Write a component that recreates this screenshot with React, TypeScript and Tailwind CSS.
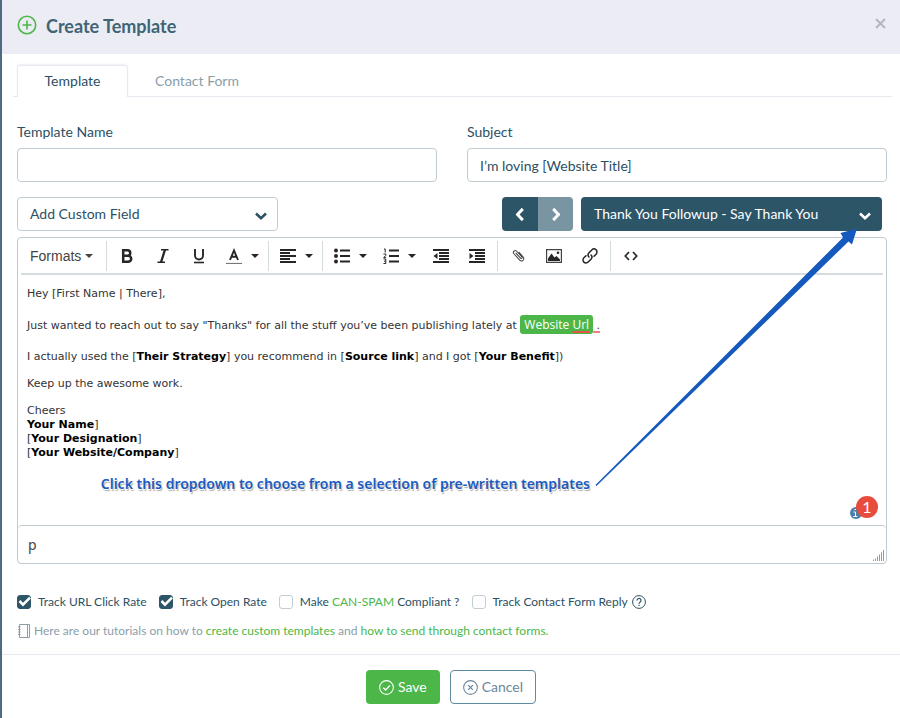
import { useState } from "react";
import type { ReactNode } from "react";

type CheckOptionProps = {
	id: string;
	defaultChecked?: boolean;
	children: ReactNode;
};

const TEMPLATES = [
	"Thank You Followup - Say Thank You",
	"Thank You Followup - Ask For Link",
	"Blank Template",
];

const CUSTOM_FIELDS = ["Add Custom Field", "First Name", "Website Url"];

function Chevron({ className }: { className: string }) {
	return (
		<svg viewBox="0 0 12 8" fill="none" className={className} aria-hidden="true">
			<path d="M1 1.5 6 6.2l5-4.700" stroke="currentColor" strokeWidth="2.6" />
		</svg>
	);
}

function Caret() {
	return (
		<svg viewBox="0 0 8 4" className="h-1 w-2" fill="currentColor" aria-hidden="true">
			<path d="M0 0h8L4 4z" />
		</svg>
	);
}

function ToolGroup({ children }: { children: ReactNode }) {
	return (
		<div className="flex h-[30px] items-center border-l border-[#d5dce0] px-[2px]">
			{children}
		</div>
	);
}

function Tool({ label, children }: { label: string; children: ReactNode }) {
	return (
		<button
			type="button"
			aria-label={label}
			className="flex h-[30px] w-9 items-center justify-center"
		>
			{children}
		</button>
	);
}

function SplitTool({ label, children }: { label: string; children: ReactNode }) {
	return (
		<div className="flex">
			<button
				type="button"
				aria-label={label}
				className="flex h-[30px] w-[34px] items-center justify-center"
			>
				{children}
			</button>
			<button
				type="button"
				aria-label={`${label} options`}
				className="flex h-[30px] w-[15px] items-center"
			>
				<Caret />
			</button>
		</div>
	);
}

function CheckOption({ id, defaultChecked, children }: CheckOptionProps) {
	return (
		<div className="flex items-center gap-[7px]">
			<span className="relative flex size-[14px]">
				<input
					id={id}
					type="checkbox"
					defaultChecked={defaultChecked}
					className="peer size-[14px] appearance-none rounded-[3px] border border-[#c3ced4] bg-white checked:border-[#2c5568] checked:bg-[#2c5568]"
				/>
				<svg
					viewBox="0 0 14 14"
					className="pointer-events-none absolute inset-0 hidden size-[14px] peer-checked:block"
					fill="none"
					aria-hidden="true"
				>
					<path d="m2.500 6 3.500 3.700L13 2.700" stroke="#fff" strokeWidth="2.6" />
				</svg>
			</span>
			<label htmlFor={id}>{children}</label>
		</div>
	);
}

function EditorToolbar() {
	return (
		<div className="mx-[3px] flex h-[37px] items-center border-b-2 border-[#d5dce0] text-[#262626]">
			<button
				type="button"
				className="flex w-[85px] items-center gap-1 pl-[9px] font-['Liberation_Sans',sans-serif] text-sm text-[#444]"
			>
				Formats
				<Caret />
			</button>
			<ToolGroup>
				<Tool label="Bold">
					<svg viewBox="0 0 16 16" className="size-4" fill="none" stroke="currentColor" strokeWidth="2.5">
						<path d="M4.2 2.2h4.300a2.700 2.700 0 0 1 0 5.500H4.2zM4.2 7.700h5a3 3 0 0 1 0 6H4.2z" />
					</svg>
				</Tool>
				<Tool label="Italic">
					<svg viewBox="0 0 16 16" className="size-4" fill="none" stroke="currentColor">
						<path d="M6 1.700h7.500M2.500 14.300H10" strokeWidth="1.4" />
						<path d="M10 1.700 6 14.300" strokeWidth="2.3" />
					</svg>
				</Tool>
				<Tool label="Underline">
					<svg viewBox="0 0 16 16" className="size-4" fill="none" stroke="currentColor">
						<path d="M4 1v6.500a4 4 0 0 0 8 0V1" strokeWidth="1.9" />
						<path d="M3 14.500h10" strokeWidth="1.6" />
					</svg>
				</Tool>
				<SplitTool label="Text color">
					<svg viewBox="0 0 16 16" className="size-4" fill="none" stroke="currentColor">
						<path d="M4 12 8 2.500 12 12M5.500 8.800h5" strokeWidth="1.9" />
						<path d="M0 15.500h16" stroke="#777" strokeWidth="1.2" />
					</svg>
				</SplitTool>
			</ToolGroup>
			<ToolGroup>
				<SplitTool label="Align">
					<svg viewBox="0 0 16 14" className="h-[14px] w-4" stroke="currentColor" strokeWidth="2">
						<path d="M0 1h16M0 4h10M0 7h16M0 10h10M0 13h16" />
					</svg>
				</SplitTool>
			</ToolGroup>
			<ToolGroup>
				<SplitTool label="Bullet list">
					<svg viewBox="0 0 16 16" className="size-4" fill="currentColor">
						<circle cx="2" cy="2.5" r="2" />
						<circle cx="2" cy="8" r="2" />
						<circle cx="2" cy="13.5" r="2" />
						<path d="M6 1.500h10v2H6zM6 7h10v2H6zM6 12.500h10v2H6z" />
					</svg>
				</SplitTool>
				<SplitTool label="Numbered list">
					<svg viewBox="0 0 16 16" className="size-4" fill="none" stroke="currentColor">
						<path d="M6 2.500h10M6 8h10M6 13.500h10" strokeWidth="2" />
						<path d="M1 1h1.200v3.500M.5 6h2.300v1.400L.7 9.600h2.400M.5 11h2.300v4.500H.5M1 13.200h1.800" strokeWidth="1" />
					</svg>
				</SplitTool>
				<Tool label="Decrease indent">
					<svg viewBox="0 0 16 14" className="h-[14px] w-4" fill="currentColor">
						<path d="M0 0h16v2H0zM6 3h10v2H6zM6 6h10v2H6zM6 9h10v2H6zM0 12h16v2H0zM4.500 4v6L.5 7z" />
					</svg>
				</Tool>
				<Tool label="Increase indent">
					<svg viewBox="0 0 16 14" className="h-[14px] w-4" fill="currentColor">
						<path d="M0 0h16v2H0zM6 3h10v2H6zM6 6h10v2H6zM6 9h10v2H6zM0 12h16v2H0zM.5 4v6l4-3z" />
					</svg>
				</Tool>
			</ToolGroup>
			<ToolGroup>
				<Tool label="Attach file">
					<svg viewBox="0 0 14 14" className="size-[13px]" fill="none" stroke="#444" strokeWidth="1.1">
						<path d="m4 4.200 5.200 5.700a1 1 0 0 0 1.500-1.400L5 2.400a2 2 0 0 0-3 2.700l6.300 6.800a2.500 2.500 0 0 0 3.800-3.300L7.300 3.300" />
					</svg>
				</Tool>
				<Tool label="Insert image">
					<svg viewBox="0 0 16 14" className="h-[14px] w-4">
						<path d="M.6.6h14.800v12.800H.6z" fill="none" stroke="#444" strokeWidth="1.2" />
						<path d="M2 12V9.500l3.500-5 3 4L10.500 7l3.500 3.500V12z" fill="currentColor" />
						<circle cx="12" cy="3.8" r="1.3" fill="currentColor" />
					</svg>
				</Tool>
				<Tool label="Insert link">
					<svg viewBox="0 0 16 16" className="size-4" fill="none" stroke="currentColor" strokeWidth="1.5" strokeLinecap="round">
						<path d="M7 9a3 3 0 0 1 0-4.200l2.800-2.900a3 3 0 0 1 4.300 4.300L12 8.300" />
						<path d="M9 7a3 3 0 0 1 0 4.200l-2.800 2.900a3 3 0 0 1-4.300-4.300L4 7.700" />
					</svg>
				</Tool>
			</ToolGroup>
			<ToolGroup>
				<Tool label="Source code">
					<svg viewBox="0 0 14 10" className="h-[10px] w-[14px]" fill="none" stroke="currentColor" strokeWidth="1.7">
						<path d="M5 1 1.300 5 5 9M9 1l3.700 4L9 9" />
					</svg>
				</Tool>
			</ToolGroup>
		</div>
	);
}

function EditorBody() {
	return (
		<div className="h-[250px] px-[9px] pt-3 font-['DejaVu_Sans',sans-serif] text-[11px] leading-[14px] text-[#333]">
			<p>Hey [First Name | There],</p>
			<p className="mt-[14px] leading-5">
				Just wanted to reach out to say "Thanks" for all the stuff you’ve been publishing lately at{" "}
				<span className="inline-block rounded-[3px] bg-[#4cb748] px-1 font-['Open_Sans',sans-serif] text-xs leading-[19px] font-medium text-white">
					Website{" "}
					<span className="underline decoration-[#e5534b] decoration-2 underline-offset-2">Url</span>
				</span>
				<span className="underline decoration-[#f08080] decoration-2 underline-offset-2">&nbsp;.</span>
			</p>
			<p className="mt-[14px]">
				I actually used the [<b className="text-black">Their Strategy</b>] you recommend in [
				<b className="text-black">Source link</b>] and I got [<b className="text-black">Your Benefit</b>])
			</p>
			<p className="mt-[13px]">Keep up the awesome work.</p>
			<p className="mt-[13px]">
				Cheers
				<br />
				<b className="text-black">Your Name</b>]
				<br />[<b className="text-black">Your Designation</b>]
				<br />[<b className="text-black">Your Website/Company</b>]
			</p>
		</div>
	);
}

// Callout text with a tapered arrow that ends at the template drop-down
function TemplateHint() {
	return (
		<div className="pointer-events-none absolute -top-[10px] right-7 flex items-end">
			<p className="font-['Noto_Sans',sans-serif] text-sm leading-5 font-semibold whitespace-nowrap text-[#1a5bbf] [text-shadow:0_1px_0_#fff,1px_2px_1px_#aaa]">
				Click this dropdown to choose from a selection of pre-written templates
			</p>
			<svg viewBox="0 0 268 266" className="h-[266px] w-[268px]" aria-hidden="true">
				<path
					d="M5.500 257 253 9.500 250.500 5 267 .5 262 16.500 258.500 13.500 6.500 258z"
					fill="#1659bd"
				/>
			</svg>
		</div>
	);
}

export default function App() {
	const [template, setTemplate] = useState(TEMPLATES[0]);
	const [subject, setSubject] = useState("I’m loving [Website Title]");
	const index = TEMPLATES.indexOf(template);

	return (
		<div className="min-h-screen border-l-2 border-[#4f6b7d] bg-white font-['Lato',sans-serif] text-sm text-[#2c5064]">
			<header className="flex h-[54px] items-center justify-between bg-[#ecedf4] pr-[14px] pb-[2px] pl-[15px]">
				<h1 className="flex items-center gap-[9px] text-lg font-bold text-[#3f6475]">
					<svg viewBox="0 0 20 20" className="mb-[2px] size-5" fill="none" stroke="#4cb748" aria-hidden="true">
						<circle cx="10" cy="10" r="8.7" strokeWidth="1.6" />
						<path d="M10 5.500v9M5.500 10h9" strokeWidth="1.6" />
					</svg>
					Create Template
				</h1>
				<button type="button" aria-label="Close" className="mb-[6px] text-[#b3b8c0]">
					<svg viewBox="0 0 11 11" className="size-[11px]" fill="none" stroke="currentColor" strokeWidth="2.2">
						<path d="m1 1 9 9M10 1l-9 9" />
					</svg>
				</button>
			</header>

			<nav className="mt-[11px] mr-2 ml-[11px] flex border-b border-[#e6e9ef] pl-1">
				<a
					href="#template"
					className="-mb-px h-8 w-[111px] rounded-t border border-b-0 border-[#e6e9ef] bg-white py-[3px] text-center leading-6 shadow-[0_-1px_2px_#eceef3]"
				>
					Template
				</a>
				<a href="#contact-form" className="ml-[27px] pt-1 pb-[3px] leading-6 text-[#8a9ea9]">
					Contact Form
				</a>
			</nav>

			<main className="pr-[13px] pl-[15px]">
				<div className="mt-[25px] grid grid-cols-2 gap-[30px]">
					<div>
						<label htmlFor="template-name" className="block leading-5">
							Template Name
						</label>
						<input
							id="template-name"
							type="text"
							className="mt-[6px] block h-[34px] w-full rounded border border-[#c0ccd2] px-3"
						/>
					</div>
					<div>
						<label htmlFor="subject" className="block leading-5">
							Subject
						</label>
						<input
							id="subject"
							type="text"
							value={subject}
							onChange={(e) => setSubject(e.target.value)}
							className="mt-[6px] block h-[34px] w-full rounded border border-[#c0ccd2] px-3"
						/>
					</div>
				</div>

				<div className="mt-[15px] flex justify-between pr-[5px]">
					<div className="relative w-[261px]">
						<select
							aria-label="Add Custom Field"
							className="block h-[34px] w-full appearance-none rounded border border-[#c0ccd2] bg-white px-3"
						>
							{CUSTOM_FIELDS.map((field) => (
								<option key={field}>{field}</option>
							))}
						</select>
						<Chevron className="pointer-events-none absolute top-[15px] right-[11px] h-2 w-3" />
					</div>
					<div className="flex gap-2">
						<div className="flex overflow-hidden rounded text-white">
							<button
								type="button"
								aria-label="Previous template"
								className="flex h-[34px] w-9 items-center justify-center bg-[#2c5568]"
								onClick={() => setTemplate(TEMPLATES[Math.max(index - 1, 0)])}
							>
								<Chevron className="h-[9px] w-[14px] rotate-90" />
							</button>
							<button
								type="button"
								aria-label="Next template"
								className="flex h-[34px] w-[35px] items-center justify-center bg-[#7a95a2]"
								onClick={() => setTemplate(TEMPLATES[Math.min(index + 1, TEMPLATES.length - 1)])}
							>
								<Chevron className="h-[9px] w-[14px] -rotate-90" />
							</button>
						</div>
						<div className="relative w-[301px] text-white">
							<select
								aria-label="Template"
								value={template}
								onChange={(e) => setTemplate(e.target.value)}
								className="block h-[34px] w-full appearance-none rounded bg-[#2c5568] px-[13px]"
							>
								{TEMPLATES.map((name) => (
									<option key={name}>{name}</option>
								))}
							</select>
							<Chevron className="pointer-events-none absolute top-[15px] right-[11px] h-2 w-3" />
						</div>
					</div>
				</div>

				<div className="relative mt-[6px] rounded border border-[#c0ccd2]">
					<EditorToolbar />
					<EditorBody />
					<div className="flex h-[38px] items-center justify-between rounded-sm border-t border-[#c0ccd2] pr-[2px] pl-[10px] font-['Noto_Sans',sans-serif] text-sm text-[#444]">
						p
						<svg viewBox="0 0 11 11" className="mb-[2px] size-[11px] self-end" stroke="#999" aria-hidden="true">
							<path d="M.5 11V9.500M2.500 11V8.500M4.500 11V6.500M6.500 11V4.500M8.500 11V2.500M10.500 11V0" />
						</svg>
					</div>
					<TemplateHint />
					<div className="absolute right-2 bottom-[45px] flex items-end">
						<svg viewBox="0 0 12 12" className="-mr-[6px] -mb-px size-3" aria-hidden="true">
							<circle cx="6" cy="6" r="6" fill="#4a7fae" />
							<path d="M3.500 5H5.500V9.500M3.300 9.500h4M4.500 2.500h1.500" stroke="#fff" fill="none" />
						</svg>
						<span className="flex size-[22px] items-center justify-center rounded-full bg-[#e74c3c] text-base leading-none text-white">
							1
						</span>
					</div>
				</div>

				<div className="mt-[30px] flex items-center gap-3 text-xs leading-4">
					<CheckOption id="track-url" defaultChecked>
						Track URL Click Rate
					</CheckOption>
					<CheckOption id="track-open" defaultChecked>
						Track Open Rate
					</CheckOption>
					<CheckOption id="can-spam">
						Make{" "}
						<a href="#can-spam" className="text-[#4cb748]">
							CAN-SPAM
						</a>{" "}
						Compliant ?
					</CheckOption>
					<div className="flex items-center gap-1">
						<CheckOption id="track-reply">Track Contact Form Reply</CheckOption>
						<svg viewBox="0 0 14 14" className="size-[14px]" fill="none" stroke="currentColor" aria-hidden="true">
							<circle cx="7" cy="7" r="6.4" />
							<path d="M5 5.500a2 2 0 1 1 3 1.700c-.7.400-1 .7-1 1.500M7 9.700V11" strokeWidth="1.2" />
						</svg>
					</div>
				</div>
				<p className="mt-[13px] flex items-center gap-[3px] text-xs leading-4 text-[#8a9ea9]">
					<svg viewBox="0 0 14 14" className="size-[14px]" fill="none" stroke="currentColor" aria-hidden="true">
						<path d="M2.500.5h10v13h-10zM10.500.5v13M1 3h2.500M1 5.500h2.500M1 8h2.500M1 10.500h2.500" />
					</svg>
					<span>
						Here are our tutorials on how to{" "}
						<a href="#custom-templates" className="text-[#4cb748]">
							create custom templates
						</a>{" "}
						and{" "}
						<a href="#send-contact-forms" className="text-[#4cb748]">
							how to send through contact forms.
						</a>
					</span>
				</p>
			</main>

			<footer className="mt-[15px] flex justify-center gap-[10px] border-t border-[#e6e9ef] pt-[15px]">
				<button
					type="button"
					className="flex h-[34px] items-center gap-1 rounded bg-[#4cb748] px-[13px] text-white"
				>
					<svg viewBox="0 0 14 14" className="size-[15px]" fill="none" stroke="currentColor" aria-hidden="true">
						<circle cx="7" cy="7" r="6.4" />
						<path d="m4 7.200 2.200 2.200L10.200 5" strokeWidth="1.3" />
					</svg>
					Save
				</button>
				<button
					type="button"
					className="flex h-[34px] items-center gap-1 rounded border border-[#5f8ba3] px-3 text-[#6b8799]"
				>
					<svg viewBox="0 0 14 14" className="size-[15px]" fill="none" stroke="currentColor" aria-hidden="true">
						<circle cx="7" cy="7" r="6.4" />
						<path d="m4.800 4.800 4.400 4.400M9.200 4.800 4.800 9.200" strokeWidth="1.2" />
					</svg>
					Cancel
				</button>
			</footer>
		</div>
	);
}
